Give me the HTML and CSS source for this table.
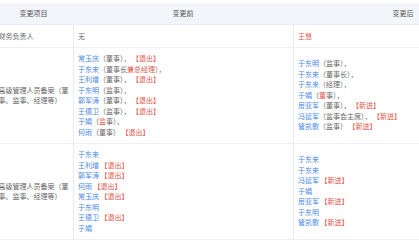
FILE: index.html
```html
<!DOCTYPE html>
<html lang="zh-CN">
<head>
<meta charset="utf-8">
<link rel="stylesheet" href="styles.css">
</head>
<body>
<table class="change-table">
  <colgroup>
    <col class="col-item">
    <col class="col-before">
    <col class="col-after">
  </colgroup>
  <thead>
    <tr>
      <th>变更项目</th>
      <th>变更前</th>
      <th>变更后</th>
    </tr>
  </thead>
  <tbody>
    <tr>
      <td class="item">财务负责人</td>
      <td>无</td>
      <td><span class="hl">王慧</span></td>
    </tr>
    <tr>
      <td class="item">高级管理人员备案（董事、监事、经理等）</td>
      <td>
        <div><a class="nm">常玉庆</a>（董事）， <span class="hl">【退出】</span></div>
        <div><a class="nm">于东来</a>（董事长<span class="hl">兼总经理</span>），</div>
        <div><a class="nm">王利增</a>（董事）， <span class="hl">【退出】</span></div>
        <div><a class="nm">于东明</a>（监事），</div>
        <div><a class="nm">郭军涛</a>（董事）， <span class="hl">【退出】</span></div>
        <div><a class="nm">王德卫</a>（监事）， <span class="hl">【退出】</span></div>
        <div><a class="nm">于娟</a>（<span class="hl">监</span>事），</div>
        <div><a class="nm">何雨</a>（董事） <span class="hl">【退出】</span></div>
      </td>
      <td>
        <div><a class="nm">于东明</a>（监事），</div>
        <div><a class="nm">于东来</a>（董事长），</div>
        <div><a class="nm">于东来</a>（经理），</div>
        <div><a class="nm">于娟</a>（<span class="hl">董</span>事），</div>
        <div><a class="nm">房亚军</a>（董事）， <span class="hl">【新进】</span></div>
        <div><a class="nm">冯延军</a>（监事会主席）， <span class="hl">【新进】</span></div>
        <div><a class="nm">管凯歌</a>（监事） <span class="hl">【新进】</span></div>
      </td>
    </tr>
    <tr>
      <td class="item">高级管理人员备案（董事、监事、经理等）</td>
      <td>
        <div><a class="nm">于东来</a></div>
        <div><a class="nm">王利增</a> <span class="hl">【退出】</span></div>
        <div><a class="nm">郭军涛</a> <span class="hl">【退出】</span></div>
        <div><a class="nm">何雨</a> <span class="hl">【退出】</span></div>
        <div><a class="nm">常玉庆</a> <span class="hl">【退出】</span></div>
        <div><a class="nm">于东明</a></div>
        <div><a class="nm">王德卫</a> <span class="hl">【退出】</span></div>
        <div><a class="nm">于娟</a></div>
      </td>
      <td>
        <div><a class="nm">于东来</a></div>
        <div><a class="nm">于东来</a></div>
        <div><a class="nm">冯延军</a> <span class="hl">【新进】</span></div>
        <div><a class="nm">于娟</a></div>
        <div><a class="nm">房亚军</a> <span class="hl">【新进】</span></div>
        <div><a class="nm">于东明</a></div>
        <div><a class="nm">管凯歌</a> <span class="hl">【新进】</span></div>
      </td>
    </tr>
  </tbody>
</table>
</body>
</html>
```
FILE: styles.css
```css
html, body {
  margin: 0;
  padding: 0;
  overflow: hidden;
  background: #ffffff;
}
body {
  padding-top: 3px;
  font-family: "Noto Sans CJK SC", "Noto Sans", sans-serif;
  font-size: 7px;
  line-height: 10.5px;
  color: #666666;
}
.change-table {
  margin-left: -6px;
  border-collapse: collapse;
  table-layout: fixed;
  width: 519px;
}
.col-item { width: 79px; }
.col-before { width: 220px; }
.col-after { width: 220px; }
.change-table th {
  background: #f2f6fb;
  font-weight: normal;
  color: #555555;
  text-align: center;
  padding: 5.25px 4.5px;
  border-bottom: 1px solid #e9eef4;
}
.change-table td {
  padding: 5.5px 4.5px;
  vertical-align: middle;
  text-align: left;
  border-bottom: 1px solid #eceff3;
  border-left: 1px solid #e6ecf4;
  white-space: nowrap;
}
.change-table td.item {
  border-left: none;
  padding-left: 4.5px;
  padding-right: 1px;
  white-space: normal;
}
.nm {
  color: #4a88e8;
  text-decoration: none;
}
.hl {
  color: #e2574c;
}
```
